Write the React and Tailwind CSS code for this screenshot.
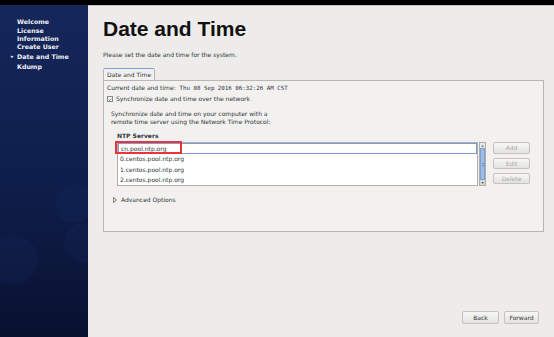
import React from "react";

const sans = { fontFamily: '"DejaVu Sans", "Liberation Sans", sans-serif' };
const mono = { fontFamily: '"DejaVu Sans Mono", "Liberation Mono", monospace' };

function Btn({ children, disabled, className = "" }) {
  return (
    <div
      className={`flex items-center justify-center rounded-[2px] border border-[#c4c2bf] bg-gradient-to-b from-[#f7f7f6] to-[#e3e2e0] text-[6px] ${
        disabled ? "text-[#aaa9a7]" : "text-[#2e3436]"
      } ${className}`}
    >
      {children}
    </div>
  );
}

export default function App() {
  return (
    <div className="w-[554px] h-[337px] overflow-hidden flex flex-col bg-black" style={sans}>
      <div className="h-[5px] shrink-0 bg-black" />
      <div className="flex flex-1 min-h-0">
        {/* sidebar */}
        <div className="relative w-[88px] shrink-0 overflow-hidden bg-gradient-to-b from-[#15265a] via-[#0f1f4c] to-[#091130]">
          <div className="absolute left-[-12px] top-[230px] w-[50px] h-[50px] rounded-full bg-[#1c2f68]/20" />
          <div className="absolute left-[55px] top-[180px] w-[38px] h-[38px] rounded-full bg-[#1d3475]/15" />
          <div className="absolute left-[64px] top-[218px] w-[40px] h-[40px] rounded-full bg-[#1d3475]/15" />
          <div className="relative flex flex-col pl-[17px] pt-[12px] text-[6.3px] font-bold leading-[7.5px] text-[#eef0f5]">
            <div className="h-[10px] flex items-center">Welcome</div>
            <div className="flex flex-col">
              <span>License</span>
              <span>Information</span>
            </div>
            <div className="h-[10px] flex items-center">Create User</div>
            <div className="relative h-[10px] flex items-center">
              <span className="absolute left-[-6px] text-[5px]">▸</span>
              Date and Time
            </div>
            <div className="h-[10px] flex items-center">Kdump</div>
          </div>
        </div>

        {/* content */}
        <div className="flex-1 flex flex-col bg-[#edeceb] border-t border-[#c8c7c5] pl-[15px] pr-[10px]">
          <div className="pt-[10px] text-[21px] font-bold leading-[26px] text-[#111]" style={{ fontFamily: '"Liberation Sans", Arial, sans-serif' }}>
            Date and Time
          </div>
          <div className="mt-[9px] text-[6px] leading-[8px] text-[#2e3436]">
            Please set the date and time for the system.
          </div>

          <div className="mt-[9px] flex">
            <div className="h-[12px] px-[3px] flex items-center border border-b-0 border-[#b8b6b3] border-t-[#7aa0d0] rounded-t-[2px] bg-[#f2f1f0] text-[6px] text-[#2e3436]">
              Date and Time
            </div>
          </div>
          <div className="h-[152px] border border-[#b8b6b3] bg-[#f2f1f0] px-[3px] pt-[3px] text-[6px] leading-[8px] text-[#2e3436]">
            <div className="flex">
              <span>Current date and time:&nbsp;&nbsp;</span>
              <span style={mono} className="text-[5.8px]">Thu 08 Sep 2016 06:32:26 AM CST</span>
            </div>
            <div className="mt-[3px] flex items-center gap-[3px]">
              <span className="w-[6px] h-[6px] border border-[#8a8886] bg-[#fafafa] flex items-center justify-center">
                <svg viewBox="0 0 6 6" className="w-[5px] h-[5px]">
                  <path d="M1 3.2 L2.4 4.6 L5 1.4" fill="none" stroke="#2e3436" strokeWidth="0.9" />
                </svg>
              </span>
              <span>Synchronize date and time over the network</span>
            </div>
            <div className="mt-[7px] pl-[4px]">
              <div>Synchronize date and time on your computer with a</div>
              <div>remote time server using the Network Time Protocol:</div>
            </div>
            <div className="mt-[6px] pl-[10px] font-bold">NTP Servers</div>
            <div className="mt-[2px] ml-[10px] flex gap-[7px]">
              <div className="relative w-[361px] h-[44px] border border-[#b0aeab] bg-white">
                <div className="h-[11px] border border-[#7a9fd0] flex items-center pl-[2px]">cn.pool.ntp.org</div>
                <div className="h-[10.5px] flex items-center pl-[2px]">0.centos.pool.ntp.org</div>
                <div className="h-[10.5px] flex items-center pl-[2px]">1.centos.pool.ntp.org</div>
                <div className="h-[10.5px] flex items-center pl-[2px]">2.centos.pool.ntp.org</div>
                <div className="absolute left-[-3px] top-[-2px] w-[67px] h-[13px] border-2 border-[#e8343a]" />
              </div>
              <div className="w-[7px] h-[44px] -ml-[6px] flex flex-col border border-[#b0aeab] bg-[#e8e7e5]">
                <div className="h-[5px] flex items-center justify-center text-[4px] text-[#666] leading-none">▴</div>
                <div className="flex-1 bg-[#9dbde6] border border-[#7a9fd0] flex items-center justify-center">
                  <div className="w-[2px] h-[3px] border-y border-[#6a8ec0]" />
                </div>
                <div className="h-[5px] flex items-center justify-center text-[4px] text-[#444] leading-none bg-[#d8d7d5]">▾</div>
              </div>
              <div className="flex flex-col gap-[4px]">
                <Btn disabled className="w-[37px] h-[12px]">Add</Btn>
                <Btn disabled className="w-[37px] h-[11px]">Edit</Btn>
                <Btn disabled className="w-[37px] h-[11px]">Delete</Btn>
              </div>
            </div>
            <div className="mt-[10px] pl-[6px] flex items-center gap-[4px]">
              <svg viewBox="0 0 5 7" className="w-[4px] h-[6px]">
                <path d="M0.5 0.5 L4.3 3.5 L0.5 6.5 Z" fill="none" stroke="#2e3436" strokeWidth="0.8" />
              </svg>
              <span>Advanced Options</span>
            </div>
          </div>

          <div className="flex-1" />
          <div className="flex justify-end gap-[5px] pb-[13px] pr-[5px]">
            <Btn className="w-[37px] h-[13px]">Back</Btn>
            <Btn className="w-[35px] h-[13px]">Forward</Btn>
          </div>
        </div>
      </div>
    </div>
  );
}
